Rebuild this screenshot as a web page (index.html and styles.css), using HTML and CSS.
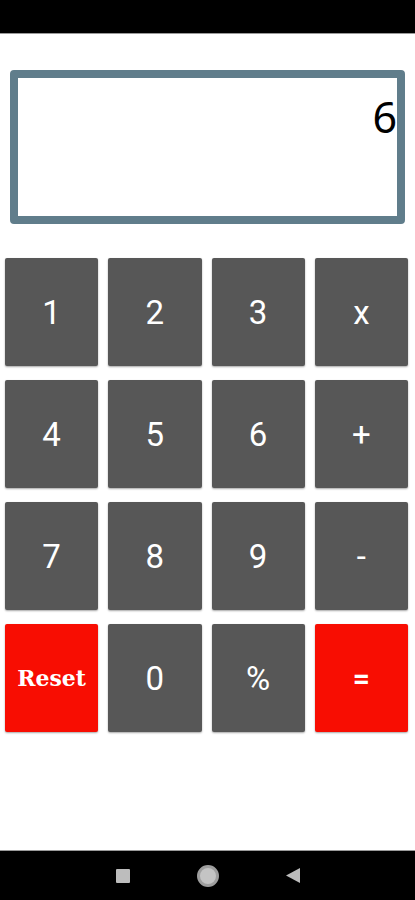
FILE: index.html
```html
<!DOCTYPE html>
<html lang="en">
  <head>
    <meta charset="UTF-8" />
    <meta name="viewport" content="width=device-width, initial-scale=1.0" />
    <title>Calculator</title>
    <link rel="stylesheet" href="styles.css">
  </head>
  <body>
    <div class="status-bar"></div>

    <main class="app">
      <div class="display">
        <span class="display-value">6</span>
      </div>

      <div class="keypad">
        <button class="key">1</button>
        <button class="key">2</button>
        <button class="key">3</button>
        <button class="key">x</button>
        <button class="key">4</button>
        <button class="key">5</button>
        <button class="key">6</button>
        <button class="key">+</button>
        <button class="key">7</button>
        <button class="key">8</button>
        <button class="key">9</button>
        <button class="key">-</button>
        <button class="key key-red key-reset">Reset</button>
        <button class="key">0</button>
        <button class="key">%</button>
        <button class="key key-red key-equals">=</button>
      </div>
    </main>

    <nav class="nav-bar">
      <span class="nav-square"></span>
      <span class="nav-circle"></span>
      <svg class="nav-back" width="14" height="15" viewBox="0 0 14 15">
        <path d="M14 0V15L0 7.5Z" fill="#bdbdbd" />
      </svg>
    </nav>
  </body>
</html>
```

FILE: styles.css
```css
body {
  margin: 0;
  height: 900px;
  display: flex;
  flex-direction: column;
  background: #fff;
  font-family: Roboto, "Noto Sans", sans-serif;
}
.status-bar {
  height: 33px;
  background: #000;
  border-bottom: 1px solid #9a9a9a;
}
.app {
  flex: 1;
  padding-top: 36px;
}
.display {
  margin: 0 10px;
  height: 138px;
  border: 8px solid #607d8b;
  border-radius: 4px;
  text-align: right;
}
.display-value {
  display: block;
  padding-top: 10px;
  font-family: "Noto Sans", sans-serif;
  font-size: 43px;
  line-height: 1.362;
  color: #000;
}
.keypad {
  display: grid;
  grid-template-columns: repeat(4, 1fr);
  grid-auto-rows: 108px;
  column-gap: 10px;
  row-gap: 14px;
  padding: 0 7px 0 5px;
  margin-top: 34px;
}
.key {
  border: none;
  border-radius: 2px;
  background: #575757;
  color: #fff;
  font-family: Roboto, sans-serif;
  font-size: 33px;
  padding: 0;
  box-shadow: 0 1px 2px rgba(0, 0, 0, 0.35);
  cursor: pointer;
}
.key-red {
  background: #f80d02;
}
.key-reset {
  font-family: "DejaVu Serif", serif;
  font-weight: bold;
  font-size: 22px;
}
.key-equals {
  font-weight: bold;
  font-size: 30px;
}
.nav-bar {
  height: 49px;
  background: #000;
  border-top: 1px solid #9a9a9a;
  display: flex;
  align-items: center;
  justify-content: center;
  gap: 67px;
}
.nav-square {
  width: 14px;
  height: 14px;
  background: #bdbdbd;
  border-radius: 1px;
}
.nav-circle {
  width: 16px;
  height: 16px;
  border: 3px solid #9e9e9e;
  border-radius: 50%;
  background: #c4c4c4;
}
```
